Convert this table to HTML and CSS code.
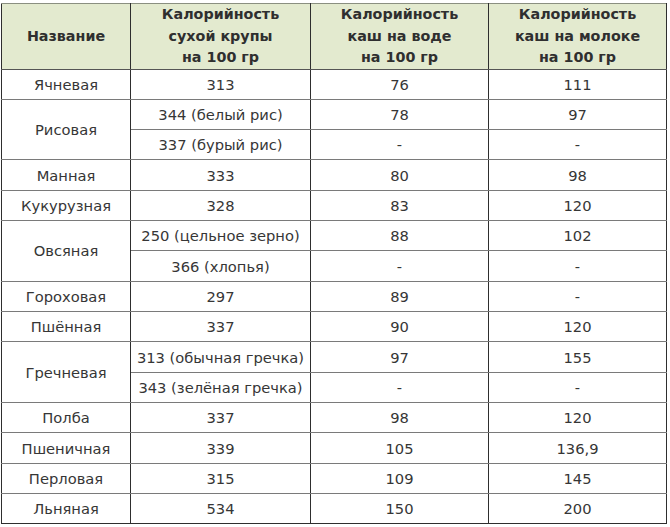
FILE: index.html
```html
<!DOCTYPE html>
<html lang="ru">
<head>
<meta charset="utf-8">
<link rel="stylesheet" href="styles.css">
</head>
<body>
<table class="cal">
  <colgroup>
    <col class="c1"><col class="c2"><col class="c3"><col class="c4">
  </colgroup>
  <thead>
    <tr class="head">
      <th>Название</th>
      <th>Калорийность<br>сухой крупы<br>на 100 гр</th>
      <th>Калорийность<br>каш на воде<br>на 100 гр</th>
      <th>Калорийность<br>каш на молоке<br>на 100 гр</th>
    </tr>
  </thead>
  <tbody>
    <tr><td>Ячневая</td><td>313</td><td>76</td><td>111</td></tr>
    <tr><td rowspan="2">Рисовая</td><td>344 (белый рис)</td><td>78</td><td>97</td></tr>
    <tr><td>337 (бурый рис)</td><td>-</td><td>-</td></tr>
    <tr><td>Манная</td><td>333</td><td>80</td><td>98</td></tr>
    <tr><td>Кукурузная</td><td>328</td><td>83</td><td>120</td></tr>
    <tr><td rowspan="2">Овсяная</td><td>250 (цельное зерно)</td><td>88</td><td>102</td></tr>
    <tr><td>366 (хлопья)</td><td>-</td><td>-</td></tr>
    <tr><td>Гороховая</td><td>297</td><td>89</td><td>-</td></tr>
    <tr><td>Пшённая</td><td>337</td><td>90</td><td>120</td></tr>
    <tr><td rowspan="2">Гречневая</td><td>313 (обычная гречка)</td><td>97</td><td>155</td></tr>
    <tr><td>343 (зелёная гречка)</td><td>-</td><td>-</td></tr>
    <tr><td>Полба</td><td>337</td><td>98</td><td>120</td></tr>
    <tr><td>Пшеничная</td><td>339</td><td>105</td><td>136,9</td></tr>
    <tr><td>Перловая</td><td>315</td><td>109</td><td>145</td></tr>
    <tr><td>Льняная</td><td>534</td><td>150</td><td>200</td></tr>
  </tbody>
</table>
</body>
</html>
```
FILE: styles.css
```css
html, body {
  margin: 0;
  padding: 0;
  background: #ffffff;
}
body {
  padding: 3px 0 0 1px;
  font-family: "DejaVu Sans", Verdana, sans-serif;
  font-size: 14.7px;
  color: #363636;
}
.cal {
  border-collapse: collapse;
  table-layout: fixed;
  width: 665px;
}
.c1 { width: 129px; }
.c2 { width: 180px; }
.c3 { width: 178px; }
.c4 { width: 178px; }
.cal th, .cal td {
  text-align: center;
  vertical-align: middle;
  padding: 0;
  border-left: 1px solid #2e2e2e;
  border-right: 1px solid #2e2e2e;
  border-top: 1px solid #7a7a7a;
  border-bottom: 1px solid #7a7a7a;
}
.head th {
  background: #e3eacf;
  font-weight: bold;
  font-size: 14.3px;
  color: #2f2f2f;
  height: 63px;
  line-height: 21.5px;
  border-top: 1px solid #8a8f80;
  border-bottom: 1px solid #555;
}
.cal tbody tr {
  height: 30.33px;
}
.cal tbody tr:last-child td {
  border-bottom: 1px solid #2e2e2e;
}
```
